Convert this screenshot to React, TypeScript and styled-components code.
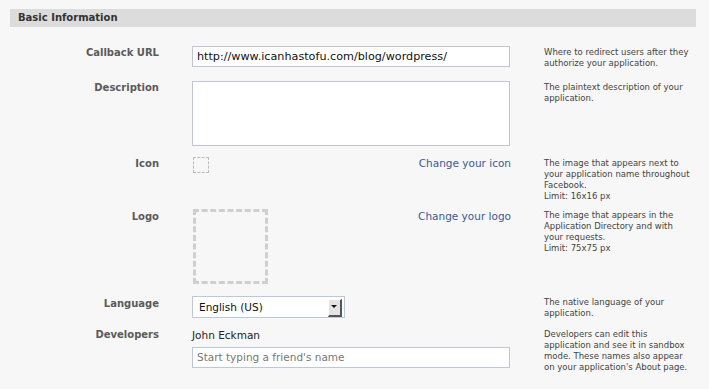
import React from "react"
import styled, { createGlobalStyle } from "styled-components"

const GlobalStyle = createGlobalStyle`
  html, body {
    margin: 0;
    padding: 0;
    background: #f7f7f7;
  }
  body {
    font-family: "DejaVu Sans", "Lucida Grande", Verdana, sans-serif;
    color: #333;
  }
`

const Page = styled.div`
  padding: 9px 13px 0 10px;
`

const Header = styled.div`
  height: 18px;
  line-height: 18px;
  background: #dcdcdc;
  padding-left: 8px;
  font-size: 10px;
  font-weight: bold;
  color: #333;
`

const Form = styled.div`
  padding-top: 19px;
`

const Row = styled.div<{ $gap: number }>`
  display: grid;
  grid-template-columns: 149px 318px 150px;
  column-gap: 33px;
  align-items: start;
  margin-bottom: ${(p) => p.$gap}px;
`

const Label = styled.div<{ $offset: number }>`
  text-align: right;
  font-size: 10px;
  font-weight: bold;
  color: #5a5a5a;
  line-height: 13px;
  padding-top: ${(p) => p.$offset}px;
`

const Hint = styled.div`
  font-size: 8.5px;
  line-height: 11px;
  color: #444;
  padding-top: 0.5px;
  margin-left: 1px;
`

const TextInput = styled.input`
  box-sizing: border-box;
  display: block;
  width: 318px;
  height: 21px;
  margin: 0;
  border: 1px solid #bdc7d8;
  background: #fff;
  padding: 0 4px;
  font-family: "DejaVu Sans", sans-serif;
  font-size: 11.2px;
  color: #111;
  outline: none;
  &::placeholder {
    color: #777;
    font-size: 10.5px;
  }
`

const TextArea = styled.textarea`
  box-sizing: border-box;
  display: block;
  width: 318px;
  height: 65px;
  margin: 0;
  border: 1px solid #bdc7d8;
  background: #fff;
  resize: none;
  outline: none;
`

const Upload = styled.div`
  display: flex;
  justify-content: space-between;
  align-items: flex-start;
  padding-left: 1px;
`

const Dashed = styled.div<{ $size: number; $border: number; $color: string }>`
  width: ${(p) => p.$size - p.$border * 2}px;
  height: ${(p) => p.$size - p.$border * 2}px;
  border: ${(p) => p.$border}px dashed ${(p) => p.$color};
`

const Link = styled.a<{ $offset?: number }>`
  font-size: 10.5px;
  line-height: 13px;
  color: #3b5998;
  text-decoration: none;
  margin-right: -1px;
  padding-top: ${(p) => p.$offset ?? 0}px;
`

const Select = styled.div`
  box-sizing: border-box;
  width: 153px;
  height: 22px;
  border: 1px solid #bdc7d8;
  background: #fff;
  display: flex;
  align-items: center;
  justify-content: space-between;
  padding: 0 2px 0 6px;
  font-size: 10.5px;
  color: #111;
`

const Arrow = styled.span`
  position: relative;
  box-sizing: border-box;
  width: 14px;
  height: 18px;
  background: #e4e4e4;
  border-top: 1px solid #fff;
  border-left: 1px solid #fff;
  border-right: 2px solid #555;
  border-bottom: 2px solid #555;
  margin-top: 1px;
  &::after {
    content: "";
    position: absolute;
    left: 2px;
    top: 5px;
    border-left: 3px solid transparent;
    border-right: 3px solid transparent;
    border-top: 3px solid #111;
  }
`

const Stack = styled.div`
  display: flex;
  flex-direction: column;
  gap: 5px;
`

const Name = styled.div`
  font-size: 10.5px;
  line-height: 14px;
  color: #222;
`

type Field = {
  label: string
  offset: number
  hint: React.ReactNode
  gap: number
  content: React.ReactNode
}

const getFields = (): Field[] => [
  {
    label: "Callback URL",
    offset: 0,
    hint: "Where to redirect users after they authorize your application.",
    gap: 12.5,
    content: <TextInput defaultValue="http://www.icanhastofu.com/blog/wordpress/" />,
  },
  {
    label: "Description",
    offset: 0,
    hint: "The plaintext description of your application.",
    gap: 11,
    content: <TextArea />,
  },
  {
    label: "Icon",
    offset: 0,
    hint: (
      <>
        The image that appears next to your application name throughout Facebook.
        <br />
        Limit: 16x16 px
      </>
    ),
    gap: 7.5,
    content: (
      <Upload>
        <Dashed $size={16} $border={1} $color="#bbb" />
        <Link href="#">Change your icon</Link>
      </Upload>
    ),
  },
  {
    label: "Logo",
    offset: 1,
    hint: (
      <>
        The image that appears in the Application Directory and with your requests.
        <br />
        Limit: 75x75 px
      </>
    ),
    gap: 12,
    content: (
      <Upload>
        <Dashed $size={75} $border={3} $color="#cfcfcf" />
        <Link href="#" $offset={1}>
          Change your logo
        </Link>
      </Upload>
    ),
  },
  {
    label: "Language",
    offset: 1,
    hint: "The native language of your application.",
    gap: 9.5,
    content: (
      <Select>
        <span>English (US)</span>
        <Arrow />
      </Select>
    ),
  },
  {
    label: "Developers",
    offset: 0,
    hint: "Developers can edit this application and see it in sandbox mode. These names also appear on your application's About page.",
    gap: 0,
    content: (
      <Stack>
        <Name>John Eckman</Name>
        <TextInput placeholder="Start typing a friend's name" />
      </Stack>
    ),
  },
]

export default function App() {
  const fields = getFields()
  return (
    <>
      <GlobalStyle />
      <Page>
        <Header>Basic Information</Header>
        <Form>
          {fields.map((f) => (
            <Row key={f.label} $gap={f.gap}>
              <Label $offset={f.offset}>{f.label}</Label>
              <div>{f.content}</div>
              <Hint>{f.hint}</Hint>
            </Row>
          ))}
        </Form>
      </Page>
    </>
  )
}
